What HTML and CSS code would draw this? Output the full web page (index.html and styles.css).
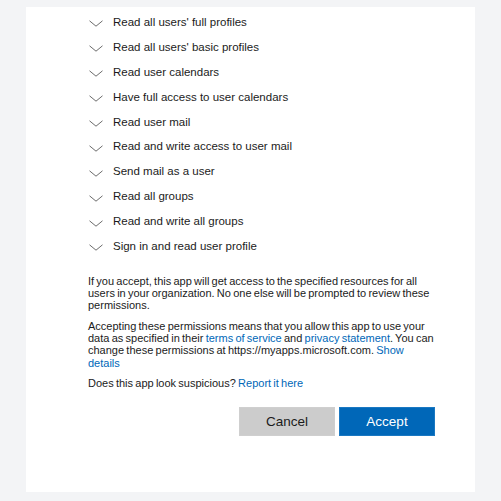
FILE: index.html
```html
<!DOCTYPE html>
<html>
<head>
<meta charset="utf-8">
<link rel="stylesheet" href="styles.css">
</head>
<body>
<div class="card">
  <ul class="perms">
    <li class="perm"><svg class="chev" viewBox="0 0 14 7" width="14" height="7"><path d="M0.5 0.8 L7 6.2 L13.5 0.8"/></svg><span>Read all users' full profiles</span></li>
    <li class="perm"><svg class="chev" viewBox="0 0 14 7" width="14" height="7"><path d="M0.5 0.8 L7 6.2 L13.5 0.8"/></svg><span>Read all users' basic profiles</span></li>
    <li class="perm"><svg class="chev" viewBox="0 0 14 7" width="14" height="7"><path d="M0.5 0.8 L7 6.2 L13.5 0.8"/></svg><span>Read user calendars</span></li>
    <li class="perm"><svg class="chev" viewBox="0 0 14 7" width="14" height="7"><path d="M0.5 0.8 L7 6.2 L13.5 0.8"/></svg><span>Have full access to user calendars</span></li>
    <li class="perm"><svg class="chev" viewBox="0 0 14 7" width="14" height="7"><path d="M0.5 0.8 L7 6.2 L13.5 0.8"/></svg><span>Read user mail</span></li>
    <li class="perm"><svg class="chev" viewBox="0 0 14 7" width="14" height="7"><path d="M0.5 0.8 L7 6.2 L13.5 0.8"/></svg><span>Read and write access to user mail</span></li>
    <li class="perm"><svg class="chev" viewBox="0 0 14 7" width="14" height="7"><path d="M0.5 0.8 L7 6.2 L13.5 0.8"/></svg><span>Send mail as a user</span></li>
    <li class="perm"><svg class="chev" viewBox="0 0 14 7" width="14" height="7"><path d="M0.5 0.8 L7 6.2 L13.5 0.8"/></svg><span>Read all groups</span></li>
    <li class="perm"><svg class="chev" viewBox="0 0 14 7" width="14" height="7"><path d="M0.5 0.8 L7 6.2 L13.5 0.8"/></svg><span>Read and write all groups</span></li>
    <li class="perm"><svg class="chev" viewBox="0 0 14 7" width="14" height="7"><path d="M0.5 0.8 L7 6.2 L13.5 0.8"/></svg><span>Sign in and read user profile</span></li>
  </ul>
  <div class="notes">
    <p class="note first">If you accept, this app will get access to the specified resources for all users in your organization. No one else will be prompted to review these permissions.</p>
    <p class="note">Accepting these permissions means that you allow this app to use your data as specified in their <a class="link" href="#">terms of service</a> and <a class="link" href="#">privacy statement</a>. You can change these permissions at https://myapps.microsoft.com. <a class="link" href="#">Show details</a></p>
    <p class="note">Does this app look suspicious? <a class="link" href="#">Report it here</a></p>
  </div>
  <div class="actions">
    <button class="btn cancel">Cancel</button>
    <button class="btn accept">Accept</button>
  </div>
</div>
</body>
</html>
```

FILE: styles.css
```css
html, body {
  margin: 0;
  padding: 0;
}
body {
  background: #f3f4f6;
  font-family: "Liberation Sans", Arial, Helvetica, sans-serif;
  color: #1b1b1b;
  padding-top: 7px;
}
.card {
  background: #ffffff;
  margin-left: 26px;
  width: 449px;
  height: 485px;
  box-sizing: border-box;
  padding: 2.5px 40px 0 62px;
}
.perms {
  list-style: none;
  margin: 0;
  padding: 0;
}
.perm {
  display: flex;
  align-items: center;
  height: 24.9px;
  font-size: 11.5px;
  line-height: 14px;
}
.chev {
  flex: none;
  margin-left: 1px;
  margin-right: 10px;
  margin-top: 4px;
  fill: none;
  stroke: #6b6b6b;
  stroke-width: 1;
}
.notes {
  margin-right: 0.5px;
}
.note {
  font-size: 11px;
  line-height: 12.2px;
  word-spacing: -0.8px;
  margin: 8.5px 0 0;
}
.note.first {
  margin-top: 16.5px;
}
.link {
  color: #0067b8;
  text-decoration: none;
}
.actions {
  display: flex;
  justify-content: flex-end;
  gap: 4px;
  margin-top: 17.5px;
}
.btn {
  width: 96px;
  height: 29px;
  border: 1px solid transparent;
  font-family: "Liberation Sans", Arial, Helvetica, sans-serif;
  font-size: 13.5px;
  padding: 0;
}
.cancel {
  background: #cccccc;
  color: #1b1b1b;
  border-color: #cfcfcf;
}
.accept {
  background: #0067b8;
  color: #ffffff;
  border-color: #1a78c2;
}
```
